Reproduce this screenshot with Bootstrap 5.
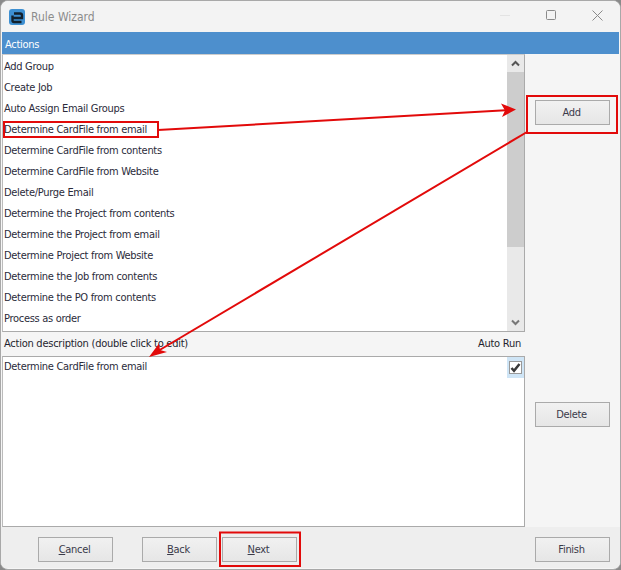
<!DOCTYPE html>
<html lang="en">
<head>
<meta charset="utf-8">
<title>Rule Wizard</title>
<link href="https://cdn.jsdelivr.net/npm/bootstrap@5.3.0/dist/css/bootstrap.min.css" rel="stylesheet">
<style>
html,body{margin:0;padding:0;background:#8a8a8a;}
body{width:621px;height:570px;overflow:hidden;font-family:"DejaVu Sans Condensed","DejaVu Sans",sans-serif;font-stretch:condensed;font-size:11px;letter-spacing:-.3px;color:#2b2b3a;}
.wiz-window{position:relative;width:621px;height:570px;background:#f5f5f5;border:1px solid #a8a8a8;border-radius:8px;overflow:hidden;}
.wiz-title{height:31px;padding-left:8px;background:#f3f3f3;color:#8c8c8c;font-size:12px;letter-spacing:0;}
.wiz-logo{width:16px;height:16px;margin-right:6px;}
.wiz-ctl{width:46px;height:28px;}
.wiz-blue{height:22px;margin:0 1px;background:#4d8fcd;color:#fff;padding-left:3px;line-height:25px;}
.wiz-main{height:473px;}
.wiz-left{width:523px;margin-left:1px;}
.wiz-list{height:278px;background:#fff;border:1px solid #aaa;border-top-color:#ccc;border-left-color:#bbb;}
.wiz-items{padding-top:1px;}
.wiz-item{height:21px;line-height:21px;padding-left:1px;white-space:nowrap;}
.wiz-desc .wiz-item{line-height:19px;}
.wiz-scroll{width:17px;background:#e9e9e9;}
.wiz-sbtn{height:17px;}
.wiz-thumb{height:175px;background:#cdcdcd;}
.wiz-label{height:24px;padding:0 4px 0 2px;color:#1f1f2e;letter-spacing:-.25px;}
.wiz-desc{height:171px;background:#fff;border:1px solid #aaa;border-left-color:#bbb;}
.wiz-check{width:17px;height:21px;background:#cfe5f6;}
.wiz-box{width:13px;height:13px;border:1px solid #999;background:#fff;}
.wiz-right{padding:46px 0 0 10px;}
.wiz-btn{width:75px;height:25px;padding:1px 2px 0 0;border:1px solid #aaa;border-radius:0;background:linear-gradient(#f1f1f1,#e6e6e6);color:#3a3a4a;font-size:11px;letter-spacing:-.3px;line-height:22px;}
.wiz-gap{margin-top:277px;}
.wiz-foot{height:41px;background:#eeeeee;padding:10px 10px 0 37px;}
.wiz-sp1{margin-left:29px;}
.wiz-sp2{margin-left:5px;}
.wiz-over{position:absolute;left:-1px;top:-1px;pointer-events:none;}
</style>
</head>
<body>
<div class="wiz-window d-flex flex-column">
  <div class="wiz-title d-flex align-items-center flex-shrink-0">
    <svg class="wiz-logo" viewBox="0 0 16 16"><rect width="16" height="16" rx="3" fill="#3d8fd1"/><path d="M5 4.500h6a2 2 0 0 1 2 2V9H4M3.500 6.500v5a1.500 1.500 0 0 0 1.500 1.500h7.500" fill="none" stroke="#12202c" stroke-width="2.400"/></svg>
    <span>Rule Wizard</span>
    <div class="ms-auto d-flex align-self-start">
      <div class="wiz-ctl d-flex align-items-center justify-content-center"><svg width="10" height="10"><path d="M0 5.500h10" stroke="#e3e3e3"/></svg></div>
      <div class="wiz-ctl d-flex align-items-center justify-content-center"><svg width="10" height="10"><rect x=".5" y=".5" width="9" height="9" rx="1" fill="none" stroke="#8a8a8a"/></svg></div>
      <div class="wiz-ctl d-flex align-items-center justify-content-center"><svg width="11" height="11"><path d="M.5.500l10 10M10.500.500l-10 10" stroke="#8a8a8a"/></svg></div>
    </div>
  </div>
  <div class="wiz-blue flex-shrink-0">Actions</div>
  <div class="wiz-main d-flex flex-shrink-0">
    <div class="wiz-left d-flex flex-column flex-shrink-0">
      <div class="wiz-list d-flex flex-shrink-0">
        <div class="wiz-items flex-grow-1 overflow-hidden">
          <div class="wiz-item">Add Group</div>
          <div class="wiz-item">Create Job</div>
          <div class="wiz-item">Auto Assign Email Groups</div>
          <div class="wiz-item">Determine CardFile from email</div>
          <div class="wiz-item">Determine CardFile from contents</div>
          <div class="wiz-item">Determine CardFile from Website</div>
          <div class="wiz-item">Delete/Purge Email</div>
          <div class="wiz-item">Determine the Project from contents</div>
          <div class="wiz-item">Determine the Project from email</div>
          <div class="wiz-item">Determine Project from Website</div>
          <div class="wiz-item">Determine the Job from contents</div>
          <div class="wiz-item">Determine the PO from contents</div>
          <div class="wiz-item">Process as order</div>
        </div>
        <div class="wiz-scroll d-flex flex-column flex-shrink-0">
          <div class="wiz-sbtn d-flex align-items-center justify-content-center"><svg width="9" height="7"><path d="M1 5.500l3.500-3.500 3.500 3.500" fill="none" stroke="#555" stroke-width="2"/></svg></div>
          <div class="wiz-thumb"></div>
          <div class="wiz-sbtn mt-auto d-flex align-items-center justify-content-center"><svg width="9" height="7"><path d="M1 1.500l3.500 3.500 3.500-3.500" fill="none" stroke="#777" stroke-width="2"/></svg></div>
        </div>
      </div>
      <div class="wiz-label d-flex align-items-center justify-content-between flex-shrink-0">
        <span>Action description (double click to edit)</span><span>Auto Run</span>
      </div>
      <div class="wiz-desc d-flex flex-shrink-0">
        <div class="wiz-item flex-grow-1">Determine CardFile from email</div>
        <div class="wiz-check d-flex align-items-center justify-content-center flex-shrink-0">
          <div class="wiz-box d-flex align-items-center justify-content-center"><svg width="11" height="11"><path d="M1.500 6l2.500 2.800 5.500-6.800" fill="none" stroke="#3a3a3a" stroke-width="2.500"/></svg></div>
        </div>
      </div>
    </div>
    <div class="wiz-right">
      <button class="btn wiz-btn d-block" type="button">Add</button>
      <button class="btn wiz-btn d-block wiz-gap" type="button">Delete</button>
    </div>
  </div>
  <div class="wiz-foot d-flex flex-shrink-0 align-items-start">
    <button class="btn wiz-btn" type="button"><u>C</u>ancel</button>
    <button class="btn wiz-btn wiz-sp1" type="button"><u>B</u>ack</button>
    <button class="btn wiz-btn wiz-sp2" type="button"><u>N</u>ext</button>
    <button class="btn wiz-btn ms-auto" type="button">Finish</button>
  </div>
  <svg class="wiz-over" width="621" height="570" viewBox="0 0 621 570">
    <g fill="none" stroke="#e20a0a" stroke-width="2">
      <rect x="4" y="122" width="154" height="15"/>
      <rect x="527" y="96" width="90" height="37"/>
      <rect x="220" y="532.500" width="80" height="33.500"/>
      <path d="M158 130L510 110"/>
      <path d="M527 132L158 351"/>
    </g>
    <path d="M516 109.500L501 103.500L505 110.500L502 117Z" fill="#e20a0a"/>
    <path d="M149 357L159 343.500L160 350L167 352Z" fill="#e20a0a"/>
  </svg>
</div>
<script src="https://cdn.jsdelivr.net/npm/bootstrap@5.3.0/dist/js/bootstrap.bundle.min.js"></script>
</body>
</html>
